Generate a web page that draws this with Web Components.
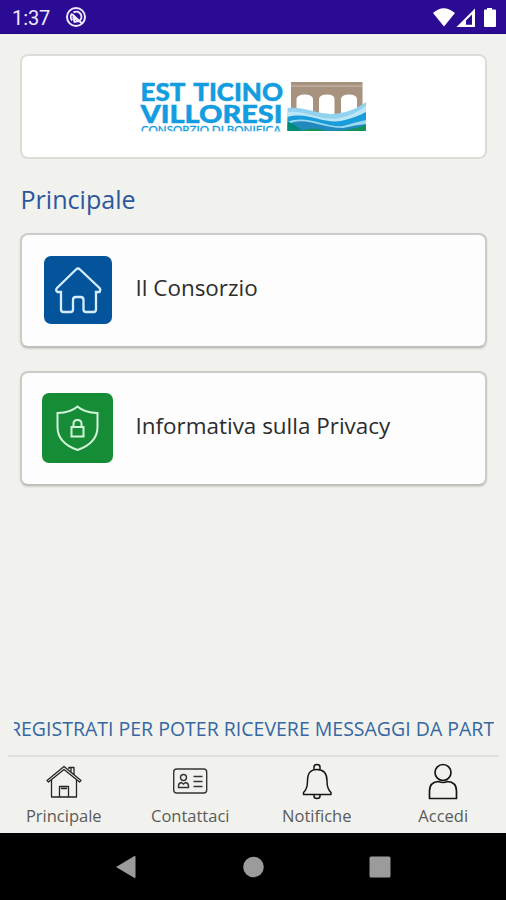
<!DOCTYPE html>
<html lang="it">
<head>
<meta charset="utf-8">
<title>Est Ticino Villoresi</title>
<style>
html,body{margin:0;padding:0}
body{width:506px;height:900px;overflow:hidden;background:#f1f2ee;font-family:"Open Sans","Noto Sans",sans-serif}
</style>
</head>
<body>
<consorzio-app></consorzio-app>
<script>
const define = (name, html) => customElements.define(name, class extends HTMLElement {
  constructor() {
    super();
    const t = document.createElement('template');
    t.innerHTML = html;
    this.attachShadow({ mode: 'open' }).append(t.content.cloneNode(true));
  }
});

define('status-bar', `
<style>
:host{display:flex;box-sizing:border-box;height:34px;flex:none;background:#2b0a94;border-bottom:1px solid #1c0782;color:#eeeafc;align-items:center;padding:1px 9px 0 12px}
span{font:400 20px/32px Roboto,sans-serif;width:53px;letter-spacing:-.1px;padding-top:2px}
svg{display:block}
.right{margin-left:auto}
</style>
<span>1:37</span>
<svg width="22" height="22" viewBox="0 0 22 22" fill="none" stroke="#eeeafc"><circle cx="11" cy="11" r="9" stroke-width="2"/><path d="M7.200 14.500A5.200 5.200 0 0 1 7 7.600M8.500 6.400A5.200 5.200 0 0 1 14.800 14.600L14 15.500" stroke-width="2"/><path d="M7 8L17 17.500M8 10.500L12.500 15.500L9.500 16Z" stroke-width="1.800"/></svg>
<svg class="right" width="66" height="22" viewBox="431 6 66 22" fill="#fff"><path d="M433 13Q443.500 3.500 455 13L444 26.500Z"/><path fill-rule="evenodd" d="M456.500 27L475 8.500V27ZM466 24.800H472V14.500L466 20.500Z"/><path d="M487 8H492V9.500H495Q496 9.500 496 10.500V26Q496 27 495 27H485Q484 27 484 26V10.500Q484 9.500 485 9.500H487Z"/></svg>`);

define('panel-card', `
<style>
:host{display:flex;box-sizing:border-box;width:467px;height:115px;border:2px solid #cbccc9;border-bottom-color:#bfc0bd;border-radius:8px;background:#fdfdfd;box-shadow:0 1px 2px #cfd0cc;align-items:center}
:host([kind=logo]){height:105px;border-color:#dcddd9;box-shadow:none;justify-content:center;background:#fff}
</style><slot></slot>`);

define('brand-logo', `
<style>
:host{display:block;width:228px;height:52px}
svg{display:block}
text{fill:#139ddf;stroke:#139ddf;font-family:Lato,sans-serif;font-weight:900}
.sub{font-family:Lato,sans-serif;font-weight:400}
</style>
<svg width="228" height="52" viewBox="140 81 228 52">
<clipPath id="t"><rect x="140" y="81" width="146" height="50.300"/></clipPath>
<g clip-path="url(#t)">
<text x="140.500" y="101" font-size="25" stroke-width=".5" textLength="142.500" lengthAdjust="spacingAndGlyphs" word-spacing="3">EST TICINO</text>
<text x="140.500" y="122.700" font-size="25.500" stroke-width=".5" textLength="142" lengthAdjust="spacingAndGlyphs">VILLORESI</text>
<text class="sub" x="141" y="134.200" font-size="11" stroke-width=".3" textLength="140" lengthAdjust="spacingAndGlyphs">CONSORZIO DI BONIFICA</text>
</g>
<path d="M291 82H362.500V112L340 120L291 112Z" fill="#a79280"/>
<path d="M291 86H362.500" stroke="#cbbdb0"/>
<path d="M296.500 113V99Q297 94.500 304.700 94.500T313 99V117H296.500ZM319 117V99Q319.500 94.500 327 94.500T334.500 99V118H319ZM341 117V99Q341.500 94.500 349 94.500T357 99V112Z" fill="#fff"/>
<path d="M287.500 108C307 106 321 117 340 113Q354 111 366 102V131H287.500Z" fill="#91d3ef"/>
<path d="M287.500 112C307 110 321 122 340 118Q354 115 366 106V131H287.500Z" fill="#bce5f6"/>
<path d="M287.500 117C307 111 323 124 341 121Q355 118 366 112V131H287.500Z" fill="#189cda"/>
<path d="M287.500 122C306 114 326 128 343 126Q356 122 366 120V131H287.500Z" fill="#9ad8f0"/>
<path d="M287.500 125C302 115 322 128 343 128Q356 125 366 124V131H287.500Z" fill="#2289bd"/>
<path d="M287.500 121.500Q295 124 302 131H287.500Z" fill="#008a78"/>
<path d="M300 131Q315 126 326 131ZM328 131Q350 131 366 125V131Z" fill="#15915b"/>
</svg>`);

define('menu-entry', `
<style>
:host{display:flex;align-items:center;height:100%;color:#2c2c2c;font-size:22.450px;line-height:30px}
.icon{width:72px;margin:0 22px 0 19.500px;padding-bottom:2px;display:flex;justify-content:center}
.label{padding-bottom:5px;white-space:nowrap}
</style><div class="icon"><slot name="icon"></slot></div><div class="label"><slot></slot></div>`);

define('news-ticker', `
<style>
:host{display:flex;width:480px;height:30px;margin:auto 12px 0 14px;overflow:hidden;color:#3567a3;font-size:19.500px;line-height:32px;white-space:nowrap}
span{flex:none;margin-left:-5px}
</style><span><slot></slot></span>`);

define('tab-bar', `
<style>
:host{display:grid;grid-template-columns:repeat(4,126.500px);box-sizing:border-box;height:78px;flex:none;position:relative;padding-left:.5px}
:host::before{content:"";position:absolute;left:8px;right:7px;top:0;height:2px;background:#dfe0dc}
</style><slot></slot>`);

define('tab-item', `
<style>
:host{display:flex;flex-direction:column;align-items:center;color:#5a5b59;font-size:16.500px;line-height:22px;padding-top:6px}
.i{height:44px}
.l{white-space:nowrap}
</style><div class="i"><slot name="icon"></slot></div><div class="l"><slot></slot></div>`);

define('system-nav', `
<style>
:host{display:block;height:67px;flex:none;background:#000}svg{display:block}
</style>
<svg width="506" height="67" viewBox="0 833 506 67" fill="#9b9b9b"><path d="M116 867L134.500 856Q135.500 855.500 135.500 857V877Q135.500 878.500 134.500 878Z"/><circle cx="253.500" cy="867" r="10.300"/><rect x="369.500" y="856.500" width="21" height="21" rx="1.500"/></svg>`);

define('consorzio-app', `
<style>
:host{display:flex;flex-direction:column;width:506px;height:900px;background:#f1f2ee}
main{flex:1;display:flex;flex-direction:column;min-height:0}
.stack{padding:20px 0 0 20px;display:flex;flex-direction:column}
h1{margin:23px 0 17px .5px;font-size:25.100px;line-height:34px;font-weight:400;color:#2c579d;height:34px}
.two{margin-top:23px}
.gap{height:12px;flex:none}
svg{display:block}
</style>
<status-bar></status-bar>
<main>
<div class="stack">
<panel-card kind="logo"><brand-logo></brand-logo></panel-card>
<h1>Principale</h1>
<panel-card><menu-entry>
<svg slot="icon" width="70" height="70" viewBox="0 0 70 70"><rect x="1" y="1" width="68" height="68" rx="7" fill="#04549b"/><path d="M35 13.500Q36 13.500 37 14.500L56.500 33Q58 35 56.500 37H53V54.500Q53 57 50.500 57H43Q40.500 57 40.500 54.500V45Q40.500 42 37.500 42H33Q30 42 30 45V54.500Q30 57 27.500 57H20.500Q18 57 18 54.500V37H14.500Q12 35 14 33L33 14.500Q34 13.500 35 13.500Z" fill="none" stroke="#d6edff" stroke-width="2.300"/></svg>Il Consorzio</menu-entry></panel-card>
<panel-card class="two"><menu-entry>
<svg slot="icon" width="71" height="70" viewBox="0 0 71 70"><rect width="71" height="70" rx="7" fill="#178c37"/><g fill="none" stroke="#d3f5d9" stroke-width="2"><path d="M35.500 13.500Q42 19.500 55.500 20V34Q55.500 50 35.500 57Q15.500 50 15.500 34V20Q29 19.500 35.500 13.500Z"/><rect x="29.500" y="34" width="12" height="9.500"/><path d="M31.500 34V31Q31.500 27 35.500 27Q39.500 27 39.500 31V34"/></g></svg>Informativa sulla Privacy</menu-entry></panel-card>
</div>
<news-ticker>REGISTRATI PER POTER RICEVERE MESSAGGI DA PART</news-ticker>
<div class="gap"></div>
<tab-bar>
<tab-item><svg slot="icon" width="40" height="40" viewBox="44 761 40 40" fill="none" stroke="#242424" stroke-width="1.300" stroke-linejoin="round"><path d="M51.500 780V797H76.500V780M47 780.500L64 766.500L81 780.500L79.500 782L64 769.500L48.500 782ZM69 769V767.500H74V774.500M71 768V772M59.500 797V786.500H68.500V797M61 788.500H67"/></svg>Principale</tab-item>
<tab-item><svg slot="icon" width="40" height="40" viewBox="170 761 40 40" fill="none" stroke="#353535" stroke-width="1.400"><rect x="173.700" y="769" width="33" height="24" rx="3"/><circle cx="183.500" cy="777.500" r="3"/><path d="M178.500 787.500V786Q178.500 783 181.500 782.500L183.500 784L185.500 782.500Q188.500 783 188.500 786V787.500ZM193.500 776.500H202.500M193.500 781.500H202.500M193.500 786.500H202.500"/></svg>Contattaci</tab-item>
<tab-item><svg slot="icon" width="40" height="40" viewBox="297 761 40 40" fill="none" stroke="#161616" stroke-width="1.500" stroke-linejoin="round"><path d="M303.500 794.500V792.500Q307.500 789 307.500 781C307.500 772 311 769.500 317 769.500S327 772 327 781Q327 789 331 792.500V794.500ZM314 769.500V767Q314 764.500 317 764.500T320 767V769.500M314 795V796Q314 798.500 317 798.500T320 796V795"/></svg>Notifiche</tab-item>
<tab-item><svg slot="icon" width="40" height="40" viewBox="423.500 761 40 40" fill="none" stroke="#161616" stroke-width="1.700" stroke-linejoin="round"><circle cx="443.500" cy="772.500" r="8"/><path d="M430 798.500V791Q430 782 439 781.500Q443.500 783.500 448 781.500Q457 782 457 791V798.500Z"/></svg>Accedi</tab-item>
</tab-bar>
</main>
<system-nav></system-nav>`);
</script>
</body>
</html>
